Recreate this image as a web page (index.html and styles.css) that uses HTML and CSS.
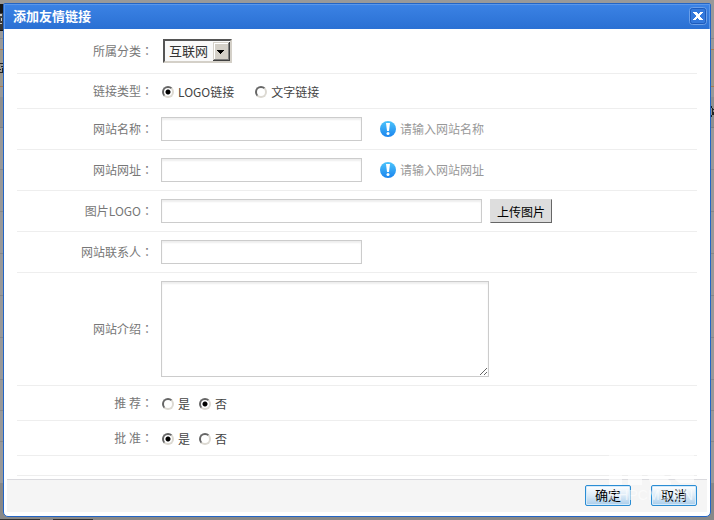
FILE: index.html
```html
<!DOCTYPE html>
<html lang="zh-CN">
<head>
    <meta charset="UTF-8">
    <meta name="viewport" content="width=device-width, initial-scale=1.0">
    <title>添加友情链接</title>
    <link rel="stylesheet" href="styles.css">
</head>
<body>
    <!-- dimmed list page behind the dialog -->
    <div class="backdrop" aria-hidden="true">
        <div class="back-top"></div>
        <div class="back-head"></div>
        <div class="back-tabs"></div>
        <div class="back-tip"></div>
        <div class="back-th"></div>
        <div class="back-row"></div>
        <div class="back-row"></div>
        <div class="back-row"></div>
        <div class="back-row"></div>
        <div class="back-row"></div>
        <div class="back-row"></div>
        <div class="back-row short"></div>
        <div class="back-row short"></div>
        <div class="back-row"></div>
        <div class="back-foot"><span></span><span></span></div>
        <svg class="back-mark left" width="3" height="80" viewBox="0 0 3 80">
            <path d="M0 4h2v2H0zM1 8h1v3H1zM0 13h2v1H0z" fill="#c8c8c8"/>
            <path d="M0 53h3v1H0zM1 56h2v1H1zM0 59h1v1H0zM2 58h1v5H2zM0 62h2v1H0z" fill="#222"/>
        </svg>
        <svg class="back-mark right" width="3" height="12" viewBox="0 0 3 12">
            <path d="M0 0h1v2H0zM1 2h1v7H1zM0 9h1v2H0zM2 3h1v1H2zM2 6h1v3H2z" fill="#222"/>
        </svg>
    </div>

    <div class="dialog" role="dialog" aria-labelledby="dialog-title">
        <div class="title-bar">
            <h1 id="dialog-title">添加友情链接</h1>
            <button type="button" class="close" aria-label="关闭">
                <svg width="19" height="19" viewBox="0 0 19 19">
                    <rect x="1.5" y="0.5" width="17" height="17" rx="3" fill="none" stroke="#6b9fe8"/>
                    <rect x="2.5" y="1.5" width="15" height="15" rx="2" fill="#3479dc" stroke="#1e5bbb"/>
                    <path d="M5 5h4v1h1v1h1V6h1V5h3v1h-1v1h-1v1h-1v2h1v1h1v1h1v1h-4v-1h-1v-1h-1v1H8v1H5v-1h1v-1h1v-1h1V8H7V7H6V6H5z" fill="#fff"/>
                </svg>
            </button>
        </div>

        <form id="link-form" class="link-form">
            <div class="row tall">
                <label class="name" for="type">所属分类<span class="colon" lang="zh-TW">：</span></label>
                <div class="field">
                    <div class="select-box">
                        <select id="type">
                            <option>互联网</option>
                        </select>
                        <svg class="arrow" width="17" height="19" viewBox="0 0 17 19">
                            <path d="M0 0h17v19H0z" fill="#404040"/>
                            <path d="M0 0h16v18H0z" fill="#d4d0c8"/>
                            <path d="M1 1h14v1H2v15H1z" fill="#fff"/>
                            <path d="M15 1h1v17H1v-1h14z" fill="#808080"/>
                            <path d="M4 8h7v1h-1v1H9v1H8v1H7v-1H6v-1H5V9H4z" fill="#000"/>
                        </svg>
                    </div>
                </div>
            </div>
            <div class="row" role="radiogroup" aria-labelledby="link-type">
                <span class="name" id="link-type">链接类型<span class="colon" lang="zh-TW">：</span></span>
                <div class="field wide">
                    <label class="choice"><input type="radio" name="linktype" checked>LOGO链接</label>
                    <label class="choice"><input type="radio" name="linktype">文字链接</label>
                </div>
            </div>
            <div class="row">
                <label class="name" for="site-name">网站名称<span class="colon" lang="zh-TW">：</span></label>
                <div class="field">
                    <input type="text" id="site-name" class="text">
                    <span class="tip">
                        <svg width="16" height="16" viewBox="0 0 16 16">
                            <defs>
                                <linearGradient id="tip-blue" x1="0" y1="0" x2="0" y2="1">
                                    <stop offset="0" stop-color="#4cc4fb"/>
                                    <stop offset="1" stop-color="#1a84ee"/>
                                </linearGradient>
                            </defs>
                            <circle cx="8" cy="8" r="8" fill="url(#tip-blue)"/>
                            <path d="M6 2h4l-1 8H7z" fill="#fff"/>
                            <circle cx="8" cy="12.5" r="1.5" fill="#fff"/>
                        </svg>
                        请输入网站名称
                    </span>
                </div>
            </div>
            <div class="row">
                <label class="name" for="site-url">网站网址<span class="colon" lang="zh-TW">：</span></label>
                <div class="field">
                    <input type="text" id="site-url" class="text">
                    <span class="tip">
                        <svg width="16" height="16" viewBox="0 0 16 16">
                            <circle cx="8" cy="8" r="8" fill="url(#tip-blue)"/>
                            <path d="M6 2h4l-1 8H7z" fill="#fff"/>
                            <circle cx="8" cy="12.5" r="1.5" fill="#fff"/>
                        </svg>
                        请输入网站网址
                    </span>
                </div>
            </div>
            <div class="row">
                <label class="name" for="logo">图片LOGO<span class="colon" lang="zh-TW">：</span></label>
                <div class="field">
                    <input type="text" id="logo" class="text long">
                    <button type="button" class="upload">上传图片</button>
                </div>
            </div>
            <div class="row">
                <label class="name" for="contact">网站联系人<span class="colon" lang="zh-TW">：</span></label>
                <div class="field">
                    <input type="text" id="contact" class="text">
                </div>
            </div>
            <div class="row">
                <label class="name" for="intro">网站介绍<span class="colon" lang="zh-TW">：</span></label>
                <div class="field">
                    <textarea id="intro"></textarea>
                </div>
            </div>
            <div class="row" role="radiogroup" aria-labelledby="recommend">
                <span class="name" id="recommend">推 荐<span class="colon" lang="zh-TW">：</span></span>
                <div class="field">
                    <label class="choice"><input type="radio" name="elite">是</label>
                    <label class="choice"><input type="radio" name="elite" checked>否</label>
                </div>
            </div>
            <div class="row" role="radiogroup" aria-labelledby="approve">
                <span class="name" id="approve">批 准<span class="colon" lang="zh-TW">：</span></span>
                <div class="field">
                    <label class="choice"><input type="radio" name="passed" checked>是</label>
                    <label class="choice"><input type="radio" name="passed">否</label>
                </div>
            </div>
            <div class="row blank"></div>
        </form>

        <div class="buttons">
            <button type="submit" form="link-form">确定</button>
            <button type="button">取消</button>
        </div>

        <div class="watermark" aria-hidden="true">
            <svg width="86" height="34" viewBox="0 0 86 34">
                <path d="M0 0h85v20H0z"/>
                <path d="M0 20h13v11H0zM19 20h14v11H19zM38 20h16l8 8v3H42zM60 20h25v9H70z"/>
            </svg>
            <span>PHPCMS.CN</span>
        </div>
    </div>
</body>
</html>
```
FILE: styles.css
```css
* {
    box-sizing: border-box;
}
body {
    margin: 0;
    padding: 3px;
    background-color: #999;
    font-family: 'Noto Sans CJK SC', sans-serif;
    font-size: 12px;
    line-height: 18px;
    color: #444;
}
button,
input,
select,
textarea {
    margin: 0;
    font: inherit;
}

/* page behind the dialog */
.backdrop {
    position: absolute;
    top: 0;
    left: 0;
    right: 0;
    height: 520px;
    overflow: hidden;
}
.back-top {
    height: 4px;
}
.back-head {
    width: 50%;
    height: 27px;
    background: linear-gradient(#181818 9px, #444 9px, #333);
    border-bottom: 1px solid #111;
}
.back-tabs {
    height: 8px;
    border-bottom: 1px solid #888;
}
.back-tip {
    height: 38px;
    margin-top: 10px;
    background-color: #9b978d;
    border-top: 1px solid #ae7c4d;
    border-bottom: 1px solid #ae7c4d;
}
.back-th {
    height: 31px;
    margin-top: 10px;
    background-color: #8f8f8f;
    border-bottom: 1px solid #808080;
}
.back-row {
    height: 42px;
    border-bottom: 1px solid #888;
}
.back-row.short {
    height: 31px;
}
.back-foot {
    display: flex;
    align-items: flex-end;
    gap: 13px;
    height: 36px;
    background-color: #888;
}
.back-foot span {
    width: 40px;
    height: 4px;
    border-bottom: 1px solid #333;
}
.back-mark {
    position: absolute;
}
.back-mark.left {
    top: 10px;
    left: 0;
}
.back-mark.right {
    top: 106px;
    right: 0;
}

.dialog {
    position: relative;
    background-color: #fff;
    border: 1px solid #2365c5;
    border-radius: 2px 2px 5px 5px;
}
.title-bar {
    display: flex;
    align-items: center;
    justify-content: space-between;
    height: 25px;
    padding: 0 2px 2px 8px;
    background: linear-gradient(#3b82e4, #2a70d3);
    border: 1px solid #5b97ea;
    border-bottom: 0;
}
.title-bar h1 {
    margin: 0;
    font-size: 13px;
    font-weight: bold;
    color: #fff;
}
.close {
    display: flex;
    padding: 0;
    border: 0;
    background: none;
    cursor: pointer;
}

.link-form {
    padding: 0 13px;
}
.row {
    display: flex;
    align-items: center;
    gap: 8px;
    min-height: 35px;
    border-bottom: 1px solid #eee;
}
.row.tall {
    min-height: 45px;
}
.row.blank {
    min-height: 20px;
}
.name {
    width: 136px;
    text-align: right;
    color: #777;
}
.colon {
    font-family: 'Noto Sans CJK TC', sans-serif;
}
.field {
    display: flex;
    align-items: center;
    flex: 1;
    gap: 8px;
    padding: 8px 0;
}
.field.wide {
    gap: 20px;
}
.row:has(.choice) .field {
    padding: 2px 0 0;
}
.text,
textarea {
    border: 1px solid #ccc;
    background-color: #fff;
    box-shadow: inset 0 2px 2px #eee;
}
.text {
    width: 201px;
    height: 24px;
    padding: 0 4px;
}
.text.long {
    width: 321px;
}
textarea {
    width: 328px;
    height: 96px;
    padding: 4px;
}
.tip {
    display: flex;
    align-items: center;
    gap: 4px;
    margin-left: 10px;
    color: #999;
}
.upload {
    height: 24px;
    padding: 2px 6px 0;
    background-color: #ddd;
    border: 1px solid;
    border-color: #ddd #666 #666 #ddd;
    color: #000;
}

.select-box {
    position: relative;
    margin-left: 2px;
}
select {
    display: block;
    width: 69px;
    height: 24px;
    padding: 0 4px;
    appearance: none;
    border: 2px solid;
    border-color: #555 #d4d0c8 #d4d0c8 #555;
    border-radius: 0;
    background-color: #f9f9f9;
    font-size: 13px;
    color: #333;
}
.arrow {
    position: absolute;
    top: 3px;
    right: 2px;
    pointer-events: none;
}

.choice {
    display: flex;
    align-items: center;
    gap: 4px;
}
input[type="radio"] {
    appearance: none;
    width: 12px;
    height: 12px;
    margin-left: 1px;
    border: 2px solid;
    border-color: #666 #dcd9d2 #dcd9d2 #666;
    border-radius: 50%;
    background-color: #fff;
}
input[type="radio"]:checked {
    background-image: radial-gradient(circle, #000 2px, transparent 3px);
}

.buttons {
    display: flex;
    justify-content: flex-end;
    align-items: center;
    gap: 20px;
    height: 33px;
    margin: 3px 3px 4px;
    padding: 0 10px 2px 0;
    background-color: #f5f5f5;
    border-top: 1px solid #dadade;
}
.buttons button {
    width: 46px;
    height: 21px;
    padding: 0;
    line-height: 18px;
    border: 1px solid #2a8dd4;
    border-radius: 2px;
    background: linear-gradient(#fff, #dcebf7 50%, #aacdea);
    box-shadow: inset 0 0 0 1px #d5eafa;
    font-size: 13px;
    color: #000;
}

.watermark {
    position: absolute;
    right: 15px;
    bottom: 14px;
    width: 86px;
    color: #fff;
    fill: #fff;
    opacity: 0.6;
    font-family: 'Liberation Sans', sans-serif;
    font-size: 14px;
    line-height: 14px;
    pointer-events: none;
}
.watermark svg {
    display: block;
}
```
